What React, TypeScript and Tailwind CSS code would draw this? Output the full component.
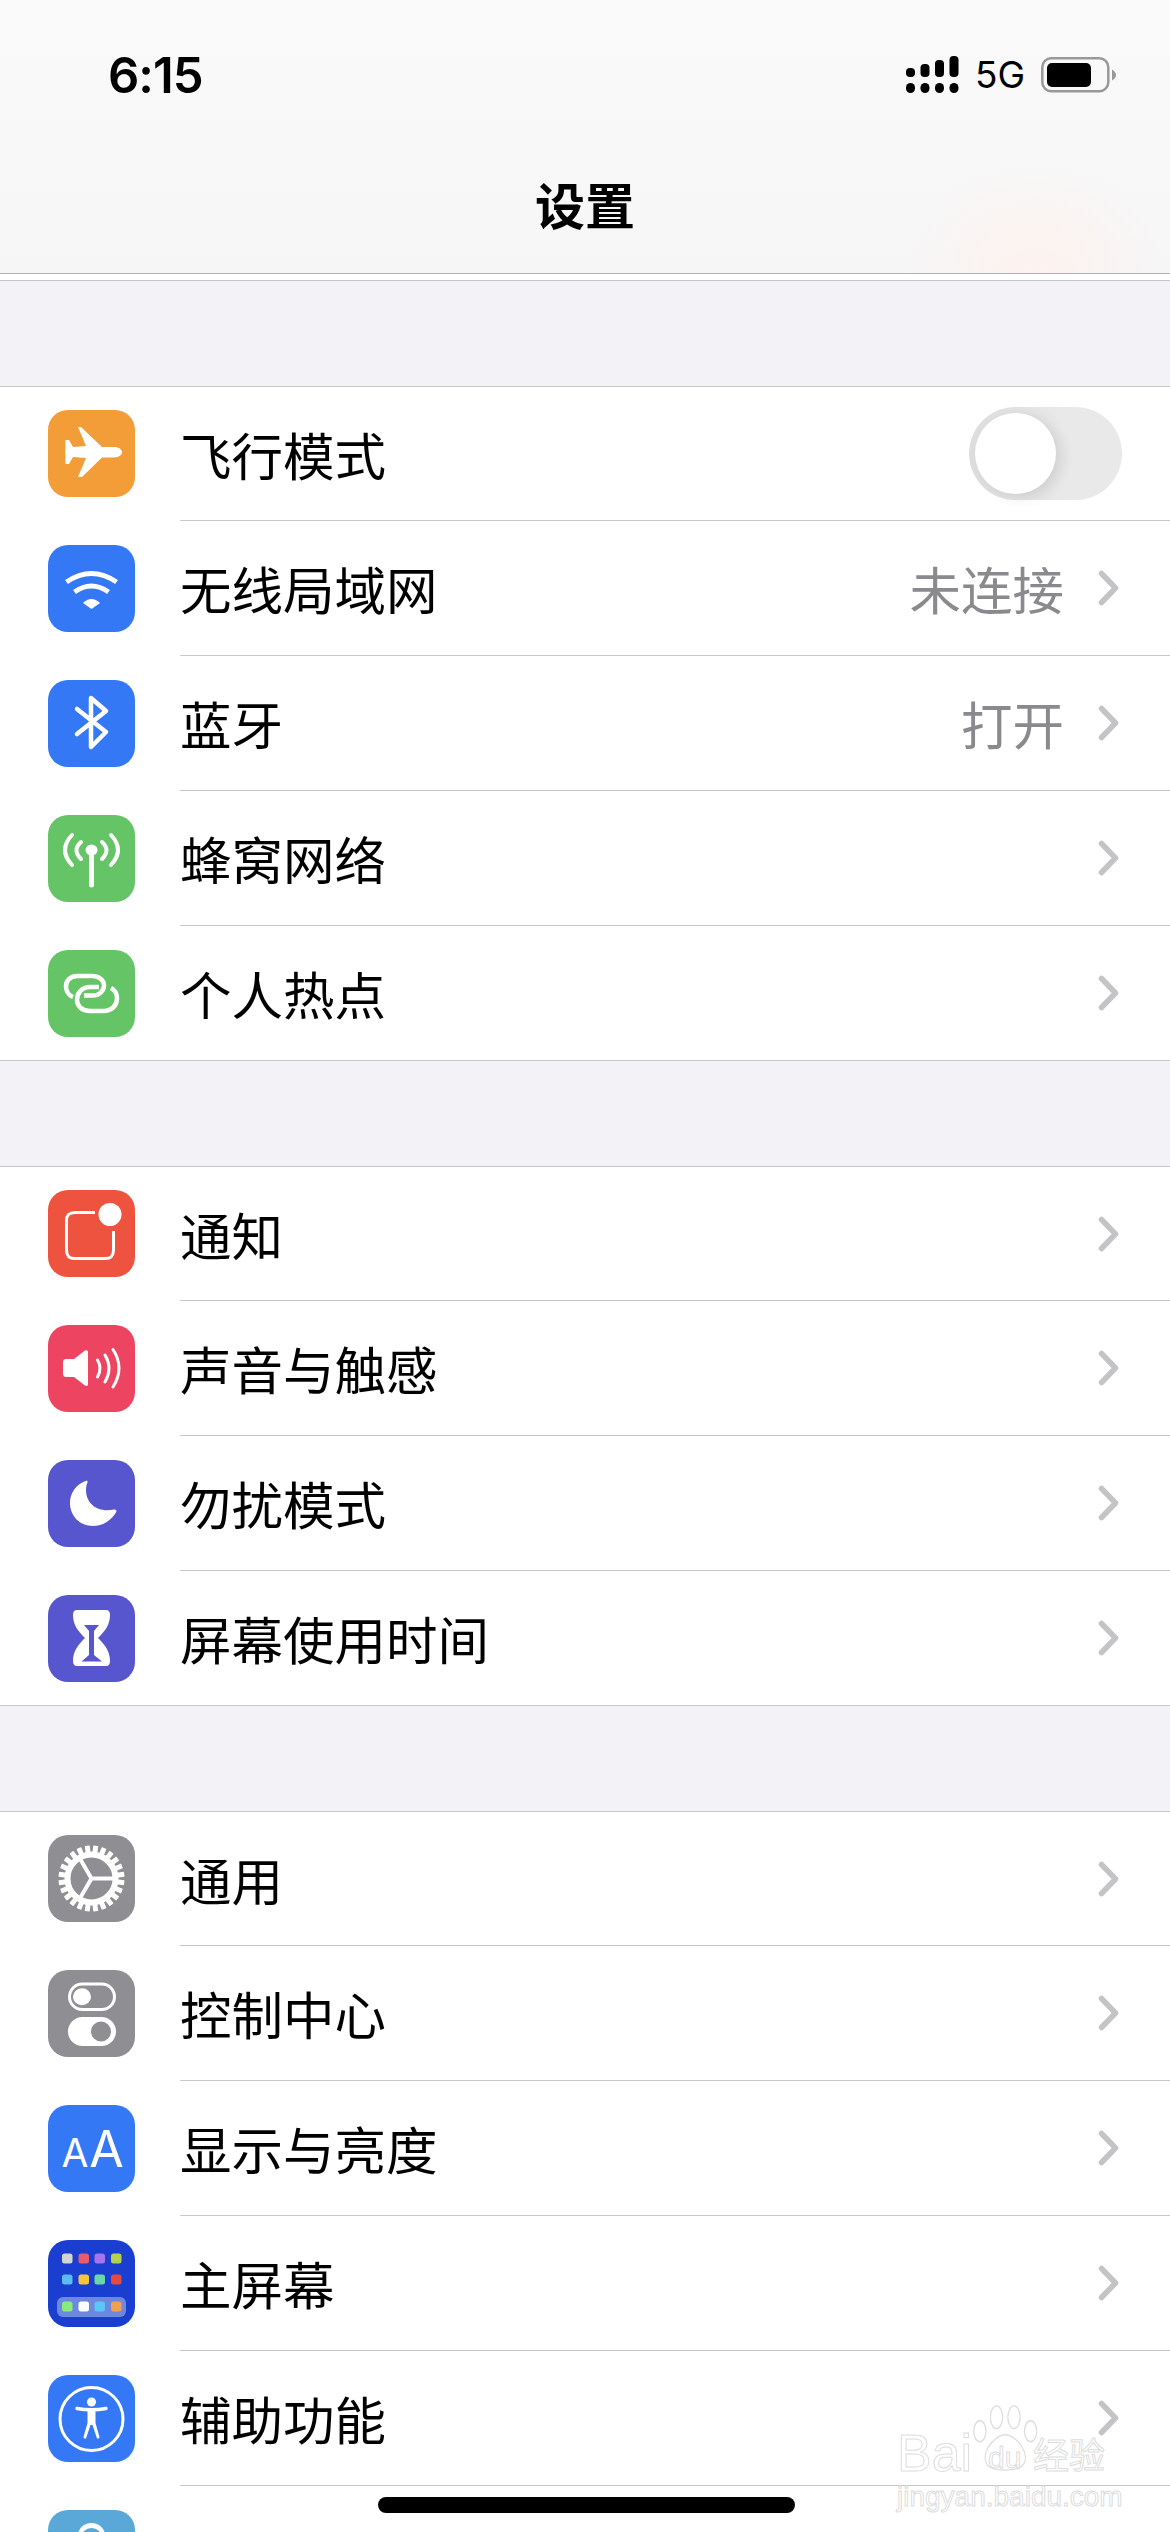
import type { ReactNode } from 'react'

const ic = 'block w-[87px] h-[87px]'

function Plane() {
  return (
    <svg viewBox="0 0 87 87" className={ic} fill="#fff">
      <path d="M33 17H30L38 36L25 37L21 30H17.500Q17 42 17.500 54H21L25 47L38 48L30 67H34L54 47.500H66C71 47.500 74 45 74 42.300C74 39.500 71 37 66 37H54Z" />
    </svg>
  )
}

function Wifi() {
  return (
    <svg viewBox="0 0 87 87" className={ic} fill="none" stroke="#fff" strokeWidth="5">
      <path d="M18.500 37Q43.500 20 68.500 37" />
      <path d="M26.500 47Q43.500 35 60.500 47" />
      <path d="M35 58Q43.500 50 52 58L43.500 64Z" fill="#fff" stroke="none" />
    </svg>
  )
}

function Bluetooth() {
  return (
    <svg viewBox="0 0 87 87" className={ic} fill="none" stroke="#fff" strokeWidth="4.500" strokeLinecap="round" strokeLinejoin="round">
      <path d="M29 29L58 52L43 67V18L58 31L29 54" />
    </svg>
  )
}

function Cellular() {
  return (
    <svg viewBox="0 0 87 87" className={ic} fill="none" stroke="#fff" strokeWidth="4" strokeLinecap="round">
      <path d="M33 27Q24 35 33 44" />
      <path d="M54 27Q63 35 54 44" />
      <path d="M24 20Q10 35 24 50" />
      <path d="M63 20Q77 35 63 50" />
      <path d="M43.500 38V70" strokeWidth="5" />
      <ellipse cx="43.500" cy="35" rx="6" ry="5.500" fill="#fff" stroke="none" />
    </svg>
  )
}

function Link() {
  return (
    <svg viewBox="0 0 87 87" className={ic} fill="none" stroke="#fff" strokeWidth="4.500">
      <path d="M25 47C20 45 18 40 18 36.500C18 31 22 26 29 26H44C51 26 56 30 56 35.500C56 41 51 45.500 45 45.500H36" />
      <path d="M63 38C67 40 69 44 69 48.500C69 55 64 61 56 61H42C34 61 29 56 29 50C29 43 34 37 42 37H51" />
    </svg>
  )
}

function Bell() {
  return (
    <svg viewBox="0 0 87 87" className={ic} fill="none" stroke="#fff" strokeWidth="3">
      <path d="M47 22.500H27C21 22.500 18.500 25 18.500 31V60C18.500 66 21 68.500 27 68.500H57C63 68.500 65.500 66 65.500 60V41" />
      <circle cx="62" cy="24.500" r="11.500" fill="#fff" stroke="none" />
    </svg>
  )
}

function Sound() {
  return (
    <svg viewBox="0 0 87 87" className={ic} fill="none" stroke="#fff" strokeWidth="3" strokeLinecap="round">
      <path d="M18 34H26L37 25.500Q40 24.500 40 27V59Q40 62 37 60.500L26 52H18Q15 52 15 49V37Q15 34 18 34Z" fill="#fff" stroke="none" />
      <path d="M49.500 35Q54.500 43 49.500 52" />
      <path d="M57 30Q65 43 57 57" />
      <path d="M65 24.500Q77 43 65 62" />
    </svg>
  )
}

function Moon() {
  return (
    <svg viewBox="0 0 87 87" className={ic} fill="#fff">
      <path d="M39 20.500C28 24 22 33 22 43C22 56 32 66 45 66C55 66 64 60 68.500 51.500Q68.500 49 66 49.500C50 53 38 44 38 30C38 27 38.500 25 39.500 22.500Q39.500 20.500 39 20.500Z" />
    </svg>
  )
}

function Hourglass() {
  return (
    <svg viewBox="0 0 87 87" className={ic}>
      <path fill="#fff" d="M29 15H58Q62 15 62 20C62 30 57 36 50 43C57 50 62 56 62 66Q62 71 58 71H29Q25 71 25 66C25 56 30 50 37 43C30 36 25 30 25 20Q25 15 29 15Z" />
      <path fill="#5856ce" d="M36 30H51L46 36V60L54 66.500H33.500L41 60V36Z" />
    </svg>
  )
}

const teeth = Array.from({ length: 24 }, (_, i) => i * 15 + 7.5)

function Gear() {
  return (
    <svg viewBox="0 0 87 87" className={ic} fill="none" stroke="#fff">
      <circle cx="43.500" cy="43.500" r="24" strokeWidth="6" />
      {teeth.map((a) => (
        <rect key={a} x="41" y="10.500" width="5" height="8" rx="0.500" fill="#fff" stroke="none" transform={`rotate(${a} 43.5 43.5)`} />
      ))}
      <path d="M43.500 43.500H68M43.500 43.500L31 22M43.500 43.500L31 65" strokeWidth="4" />
    </svg>
  )
}

function Control() {
  return (
    <svg viewBox="0 0 87 87" className={ic}>
      <rect x="21.500" y="14" width="45" height="25.500" rx="12.750" fill="none" stroke="#fff" strokeWidth="3" />
      <ellipse cx="34" cy="26.800" rx="9" ry="8.500" fill="#fff" />
      <rect x="20" y="47" width="48" height="29" rx="14.500" fill="#fff" />
      <ellipse cx="53" cy="61.500" rx="10" ry="10" fill="#8e8e93" />
    </svg>
  )
}

function Display() {
  return (
    <svg viewBox="0 0 87 87" className={ic} fill="#fff">
      <text x="27" y="62" textAnchor="middle" fontFamily="Inter, sans-serif" fontSize="39">A</text>
      <text x="58.500" y="62" textAnchor="middle" fontFamily="Inter, sans-serif" fontSize="50">A</text>
    </svg>
  )
}

const homeColors = [
  ['#d4d4d0', '#ea5a68', '#a873ee', '#b5d14f'],
  ['#5bbcf5', '#f5c53b', '#6dd6a8', '#e84a37'],
  ['#86ec7c', '#ffffff', '#5bc6f7', '#f0a04f'],
]
const homeX = [14, 30.5, 46.5, 63]
const homeY = [13.5, 34.5, 61.5]

function Home() {
  return (
    <svg viewBox="0 0 87 87" className={ic}>
      <rect x="9" y="57" width="69" height="20" rx="6" fill="#6e87df" />
      {homeColors.map((row, r) =>
        row.map((c, i) => <rect key={`${r}${i}`} x={homeX[i]} y={homeY[r]} width="10.500" height="10" rx="2.500" fill={c} />),
      )}
    </svg>
  )
}

function Access() {
  return (
    <svg viewBox="0 0 87 87" className={ic}>
      <circle cx="43.500" cy="44" r="31.500" fill="none" stroke="#fff" strokeWidth="3" />
      <circle cx="43.500" cy="27" r="4.500" fill="#fff" />
      <path d="M29 33.500Q43.500 36 58 33.500" fill="none" stroke="#fff" strokeWidth="3.500" strokeLinecap="round" />
      <path fill="#fff" d="M39.500 35H47.500V48L51.500 62Q51.500 64 49 63.500L44.500 50H42.500L38 63.500Q35.500 64 35.500 62L39.500 48Z" />
    </svg>
  )
}

function Cloud() {
  return (
    <svg viewBox="0 0 87 87" className={ic}>
      <circle cx="43.500" cy="27" r="14" fill="#fff" />
      <circle cx="27" cy="31" r="9" fill="#fff" />
      <circle cx="60" cy="31" r="9" fill="#fff" />
      <circle cx="43.500" cy="28.500" r="10.500" fill="#5aa8d8" />
    </svg>
  )
}

function Chevron() {
  return (
    <svg viewBox="0 0 21 36" className="block w-[21px] h-[36px] mr-[3px]" fill="none" stroke="#c4c4c7" strokeWidth="5.500" strokeLinecap="round" strokeLinejoin="round">
      <path d="M3.500 3.500L17.500 18L3.500 32.500" />
    </svg>
  )
}

function Toggle() {
  return (
    <div className="flex h-[93px] w-[153px] items-center rounded-full bg-[#e9e9ea] pl-[6px] [background-image:linear-gradient(90deg,#dedede,#e9e9ea_60%)]">
      <div className="h-[81px] w-[81px] rounded-full bg-white shadow-[6px_3px_14px_rgba(0,0,0,0.1)]" />
    </div>
  )
}

type RowProps = {
  icon: ReactNode
  color: string
  label: string
  value?: string
  toggle?: boolean
  first?: boolean
  last?: boolean
}

function Row({ icon, color, label, value, toggle, first, last }: RowProps) {
  return (
    <div className={`flex h-[135px] items-center bg-white pl-[48px] ${first ? 'border-t border-[#c6c6c8]' : ''} ${last ? 'border-b border-[#c6c6c8]' : ''}`}>
      <div className={`h-[87px] w-[87px] shrink-0 overflow-hidden rounded-[20px] ${first ? '-mt-px' : ''} ${color}`}>{icon}</div>
      <div className={`ml-[45px] flex h-full flex-1 items-center justify-between pr-[48px] ${last ? '' : 'border-b border-[#c6c6c8]'}`}>
        <span className="text-[51.5px] leading-none text-black">{label}</span>
        {toggle ? (
          <Toggle />
        ) : (
          <div className="flex items-center gap-[34px]">
            {value && <span className="text-[51.5px] leading-none text-[#8a8a8e]">{value}</span>}
            <Chevron />
          </div>
        )}
      </div>
    </div>
  )
}

const strokeText = '[-webkit-text-stroke:1px_#dddddd] text-white'

export default function App() {
  return (
    <div className="relative h-[2532px] w-[1170px] overflow-hidden bg-[#f2f2f7] font-['Noto_Sans_CJK_SC',sans-serif]">
      <header className="h-[273px] bg-[radial-gradient(ellipse_130px_110px_at_1035px_273px,#fdf2ee,transparent),linear-gradient(180deg,#fafafa,#f6f6f6)]">
        <div className="flex h-[173px] items-start justify-between pl-[108px] pr-[54px] pt-[46px] font-['Inter',sans-serif]">
          <span className="text-[49px] font-semibold leading-[60px] tracking-[-1px] text-black">6:15</span>
          <div className="flex items-center gap-[16px] pt-[10px]">
            <svg viewBox="0 0 53 38" className="block h-[38px] w-[53px]">
              <g fill="#000">
                <rect x="0" y="12" width="9" height="9" rx="4" />
                <rect x="14.500" y="8" width="9" height="13" rx="4" />
                <rect x="29" y="4" width="9" height="17" rx="4" />
                <rect x="43.500" y="0" width="9" height="21" rx="4" />
                <rect x="0" y="27" width="9" height="10" rx="4.500" />
                <rect x="14.500" y="27" width="9" height="10" rx="4.500" />
                <rect x="29" y="27" width="9" height="10" rx="4.500" />
                <rect x="43.500" y="27" width="9" height="10" rx="4.500" />
              </g>
            </svg>
            <span className="text-[37px] leading-[38px] text-black">5G</span>
            <svg viewBox="0 0 75 36" className="block h-[36px] w-[75px]">
              <rect x="1.300" y="1.300" width="66" height="33" rx="9" fill="none" stroke="#999" strokeWidth="2.500" />
              <rect x="6" y="6" width="44" height="24" rx="5" fill="#000" />
              <path d="M71 12.500Q75 15 75 18Q75 21 71 23.500Z" fill="#999" />
            </svg>
          </div>
        </div>
        <h1 className="text-center text-[50px] font-semibold leading-[60px] text-black">设置</h1>
      </header>
      <div className="h-px bg-[#b2b2b2]" />
      <div className="h-[6px] bg-white" />
      <div className="h-[106px] border-t border-[#c6c6c8]" />

      <section>
        <Row first icon={<Plane />} color="bg-[#f29d38]" label="飞行模式" toggle />
        <Row icon={<Wifi />} color="bg-[#3478f6]" label="无线局域网" value="未连接" />
        <Row icon={<Bluetooth />} color="bg-[#3478f6]" label="蓝牙" value="打开" />
        <Row icon={<Cellular />} color="bg-[#65c466]" label="蜂窝网络" />
        <Row icon={<Link />} color="bg-[#65c466]" label="个人热点" last />
      </section>
      <div className="h-[105px]" />
      <section>
        <Row first icon={<Bell />} color="bg-[#ee533f]" label="通知" />
        <Row icon={<Sound />} color="bg-[#ed4561]" label="声音与触感" />
        <Row icon={<Moon />} color="bg-[#5856ce]" label="勿扰模式" />
        <Row icon={<Hourglass />} color="bg-[#5856ce]" label="屏幕使用时间" last />
      </section>
      <div className="h-[105px]" />
      <section>
        <Row first icon={<Gear />} color="bg-[#8e8e93]" label="通用" />
        <Row icon={<Control />} color="bg-[#8e8e93]" label="控制中心" />
        <Row icon={<Display />} color="bg-[#3478f6]" label="显示与亮度" />
        <Row icon={<Home />} color="bg-[#1a3ecf]" label="主屏幕" />
        <Row icon={<Access />} color="bg-[#3478f6]" label="辅助功能" />
        <Row icon={<Cloud />} color="bg-[#5aa8d8]" label="" />
      </section>

      <div className="absolute bottom-[19px] left-[378px] h-[16px] w-[417px] rounded-[8px] bg-black" />

      <div className="absolute left-[895px] top-[2405px] h-[110px] w-[215px]">
        <span className={`absolute left-[2px] top-[22px] font-['Liberation_Sans',sans-serif] text-[52px] leading-none ${strokeText}`}>Bai</span>
        <svg viewBox="0 0 90 80" className="absolute left-[72px] top-0 h-[70px] w-[80px]" fill="#fff" stroke="#dddddd" strokeWidth="1.500">
          <ellipse cx="14" cy="30" rx="7" ry="12" />
          <ellipse cx="33" cy="14" rx="7" ry="13" />
          <ellipse cx="53" cy="14" rx="7" ry="13" />
          <ellipse cx="72" cy="30" rx="7" ry="12" />
          <path d="M43 34C30 34 12 58 24 70C32 76 54 76 62 70C74 58 56 34 43 34Z" />
        </svg>
        <span className={`absolute left-[93px] top-[38px] font-['Liberation_Sans',sans-serif] text-[30px] leading-none ${strokeText}`}>du</span>
        <span className={`absolute left-[138px] top-[30px] text-[36px] leading-none ${strokeText}`}>经验</span>
        <span className={`absolute left-[2px] top-[78px] whitespace-nowrap font-['Liberation_Sans',sans-serif] text-[28px] leading-none ${strokeText}`}>jingyan.baidu.com</span>
      </div>
    </div>
  )
}
